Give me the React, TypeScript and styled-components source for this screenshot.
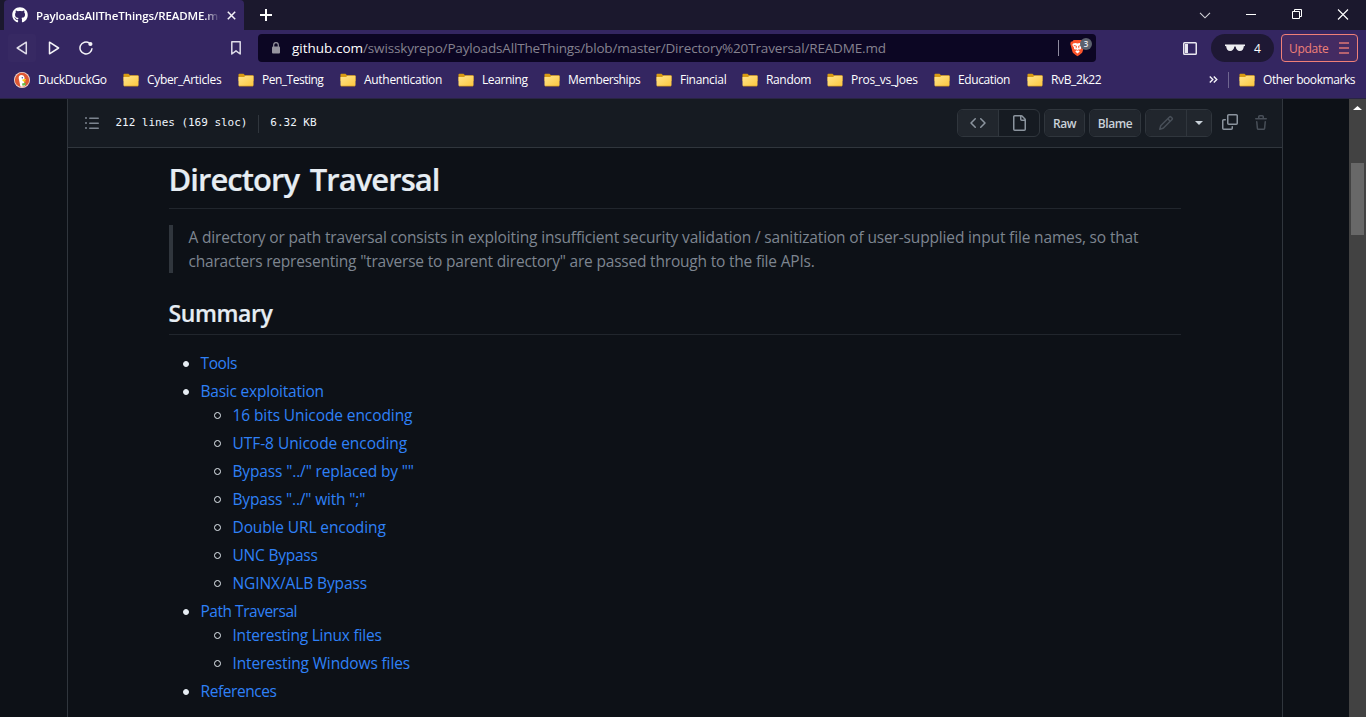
import React from "react";
import styled, { createGlobalStyle } from "styled-components";
import { FaGithub } from "react-icons/fa";

const GlobalStyle = createGlobalStyle`
  * { box-sizing: border-box; }
  html, body { margin: 0; padding: 0; background: #0d1117; overflow: hidden; }
  body { font-family: "Open Sans", "Noto Sans", sans-serif; }
`;

const Window = styled.div`
  width: 1366px;
  height: 717px;
  display: flex;
  flex-direction: column;
  overflow: hidden;
`;

/* Shared text label: size, weight, tracking and colour vary per use */
const Label = styled.span<{ $size?: number; $weight?: number; $track?: number; $color?: string }>`
  font-size: ${(p) => p.$size ?? 12}px;
  font-weight: ${(p) => p.$weight ?? 400};
  letter-spacing: ${(p) => p.$track ?? 0}px;
  color: ${(p) => p.$color ?? "#fff"};
  white-space: pre;
`;

const TitleBar = styled.div`
  height: 30px;
  flex: none;
  display: flex;
  align-items: center;
  background: #1b182d;
  padding-left: 4px;
`;

const Tab = styled.div`
  width: 240px;
  height: 30px;
  display: flex;
  align-items: center;
  padding: 0 8px;
  background: #342661;
  border-radius: 4px 4px 0 0;
`;

const TabTitle = styled.div`
  width: 184px;
  margin-left: 8px;
  overflow: hidden;
  display: flex;
  mask-image: linear-gradient(90deg, #000 168px, transparent 184px);
`;

const TabClose = styled.svg`
  margin-left: 7px;
  flex: none;
`;

const NewTab = styled.svg`
  margin-left: 15px;
`;

const Caption = styled.div`
  margin-left: auto;
  display: flex;
  align-items: center;
  height: 30px;
`;

const CaptionButton = styled.div`
  width: 46px;
  height: 30px;
  display: flex;
  align-items: center;
  justify-content: center;
`;

const Toolbar = styled.div`
  height: 36px;
  flex: none;
  display: flex;
  align-items: center;
  background: #342661;
  padding: 0 8px;
`;

const NavButton = styled.div<{ $active?: boolean }>`
  width: 28px;
  height: 28px;
  margin-right: 4px;
  border-radius: 3px;
  display: flex;
  align-items: center;
  justify-content: center;
  background: ${(p) => (p.$active ? "#372963" : "transparent")};
`;

const SaveButton = styled(NavButton)`
  margin: 0 8px 0 118px;
`;

const AddressBar = styled.div`
  width: 838px;
  height: 28px;
  display: flex;
  align-items: center;
  padding: 0 4px 0 13px;
  border-radius: 4px;
  background: #0c0623;
`;

const Url = styled.div`
  margin-left: 11px;
  display: flex;
  flex: 1;
`;

const AddressDivider = styled.div`
  width: 1px;
  height: 16px;
  background: #8f8b9f;
  margin-right: 11px;
`;

const Shield = styled.div`
  position: relative;
  width: 22px;
  height: 22px;
`;

const ShieldCount = styled.span`
  position: absolute;
  left: 10px;
  top: 1px;
  width: 12px;
  height: 12px;
  border-radius: 6px;
  background: #5c616e;
  color: #e8e8ee;
  font-size: 8px;
  font-weight: 600;
  line-height: 12px;
  text-align: center;
`;

const ShieldIcon = styled.svg`
  margin-top: 2px;
`;

const PanelIcon = styled.svg`
  margin-left: 87px;
`;

const PrivateBadge = styled.div`
  width: 63px;
  height: 28px;
  margin-left: 14px;
  border-radius: 14px;
  background: #1e1834;
  display: flex;
  align-items: center;
  padding-left: 14px;
  gap: 9px;
`;

const UpdateButton = styled.div`
  width: 77px;
  height: 28px;
  margin-left: 7px;
  border: 1px solid #f08078;
  border-radius: 4px;
  background: #442b62;
  display: flex;
  align-items: center;
  justify-content: space-between;
  padding: 0 8px 0 7px;
`;

const Bookmarks = styled.div`
  height: 33px;
  flex: none;
  display: flex;
  background: #342661;
  padding: 0 0 5px 14px;
  border-bottom: 1px solid #292542;
`;

const Bookmark = styled.div<{ $width: number }>`
  width: ${(p) => p.$width}px;
  display: flex;
  align-items: center;
  gap: 8px;
`;

const BookmarkEnd = styled.div`
  margin-left: auto;
  display: flex;
  align-items: center;
`;

const BookmarkDivider = styled.div`
  width: 1px;
  height: 16px;
  margin: 0 10px 0 10px;
  background: #6f6690;
`;

const Page = styled.div`
  flex: 1;
  min-height: 0;
  display: flex;
  background: #0d1117;
`;

const FileBox = styled.div`
  width: 1216px;
  margin-left: 67px;
  border: solid #30363d;
  border-width: 0 1px;
`;

const FileHeader = styled.div`
  height: 49px;
  display: flex;
  align-items: center;
  padding: 0 6px 0 16px;
  background: #161b22;
  border-bottom: 1px solid #30363d;
  color: #7d8590;
`;

const FileInfo = styled.div`
  display: flex;
  align-items: center;
  margin-left: 15.5px;
  padding-bottom: 2px;
  font-family: "DejaVu Sans Mono", "Liberation Mono", monospace;
  font-size: 11px;
  letter-spacing: -0.03px;
  color: #f0f6fc;
  white-space: pre;
`;

const InfoDivider = styled.div`
  width: 1px;
  height: 18px;
  margin: 4px 11px 0 11px;
  background: #30363d;
`;

const Actions = styled.div`
  margin-left: auto;
  display: flex;
  align-items: center;
`;

const Group = styled.div<{ $gap?: number }>`
  display: flex;
  height: 28px;
  margin-right: ${(p) => p.$gap ?? 4}px;
  border: 1px solid #30363d;
  border-radius: 6px;
  overflow: hidden;
`;

const GroupItem = styled.div<{ $width: number; $filled?: boolean; $color?: string; $line?: boolean }>`
  width: ${(p) => p.$width}px;
  display: flex;
  align-items: center;
  justify-content: center;
  background: ${(p) => (p.$filled ? "#21262d" : "transparent")};
  color: ${(p) => p.$color ?? "#8b949e"};
  border-right: ${(p) => (p.$line ? "1px solid #30363d" : "0")};
`;

const IconAction = styled.div<{ $dim?: boolean }>`
  width: 31px;
  display: flex;
  justify-content: center;
  padding-bottom: ${(p) => (p.$dim ? 0 : 2)}px;
  color: ${(p) => (p.$dim ? "#484f58" : "#8b949e")};
`;

const Readme = styled.article`
  width: 1012px;
  margin-left: 101px;
  padding-top: 11px;
  color: #e6edf3;
`;

const Title = styled.h1`
  margin: 0 0 16px;
  height: 50px;
  line-height: 40px;
  border-bottom: 1px solid #21262d;
  font-size: 31px;
  font-weight: 600;
  letter-spacing: -0.95px;
  word-spacing: 3.5px;
  text-indent: -0.5px;
  -webkit-text-stroke: 0.2px #e6edf3;
`;

const Quote = styled.blockquote`
  margin: 0 0 24px;
  padding: 0 0 0 15.5px;
  border-left: 4px solid #30363d;
  color: #7d8590;
  line-height: 24px;
  display: flex;
  flex-direction: column;
`;

const Heading = styled.h2`
  margin: 0 0 16px;
  height: 38px;
  line-height: 32px;
  border-bottom: 1px solid #21262d;
  font-size: 23px;
  font-weight: 600;
  letter-spacing: -0.4px;
  text-indent: -0.5px;
  -webkit-text-stroke: 0.2px #e6edf3;
`;

const List = styled.ul<{ $nested?: boolean }>`
  margin: 0;
  padding-left: ${(p) => (p.$nested ? 32 : 31.5)}px;
  list-style: none;
  line-height: 24px;
`;

const Item = styled.li`
  & + & { margin-top: 4px; }
`;

const Row = styled.div`
  display: flex;
  align-items: center;
  height: 24px;
`;

const Marker = styled.span<{ $hollow?: boolean }>`
  width: ${(p) => (p.$hollow ? 7 : 6)}px;
  height: ${(p) => (p.$hollow ? 7 : 6)}px;
  margin-left: ${(p) => (p.$hollow ? -18.5 : -18)}px;
  margin-right: ${(p) => (p.$hollow ? 11.5 : 12)}px;
  margin-top: 1px;
  border-radius: 50%;
  border: 1px solid #e6edf3;
  background: ${(p) => (p.$hollow ? "transparent" : "#e6edf3")};
`;

const Scrollbar = styled.div`
  width: 17px;
  margin-left: auto;
  background: #424242;
  display: flex;
  flex-direction: column;
  align-items: center;
  padding-top: 7px;
`;

const Thumb = styled.div`
  width: 13px;
  height: 72px;
  margin-top: 53px;
  background: #686868;
`;

const iconPaths = {
  list: "M2 4a1 1 0 100-2 1 1 0 000 2zm3.75-1.5a.75.75 0 000 1.5h8.5a.75.75 0 000-1.5h-8.5zm0 5a.75.75 0 000 1.5h8.5a.75.75 0 000-1.5h-8.5zm0 5a.75.75 0 000 1.5h8.5a.75.75 0 000-1.5h-8.5zM3 8a1 1 0 11-2 0 1 1 0 012 0zm-1 6a1 1 0 100-2 1 1 0 000 2z",
  code: "M4.72 3.22a.75.75 0 011.06 1.06L2.06 8l3.72 3.72a.75.75 0 11-1.06 1.06L.47 8.53a.75.75 0 010-1.06l4.25-4.25zm6.56 0a.75.75 0 10-1.06 1.06L13.94 8l-3.72 3.72a.75.75 0 101.06 1.06l4.25-4.25a.75.75 0 000-1.06l-4.25-4.25z",
  file: "M3.75 1.5a.25.25 0 00-.25.25v12.5c0 .138.112.25.25.25h9.5a.25.25 0 00.25-.25V6h-2.75A1.75 1.75 0 019 4.25V1.5H3.75zm6.75.062V4.25c0 .138.112.25.25.25h2.688a.252.252 0 00-.011-.013l-2.914-2.914a.272.272 0 00-.013-.011zM2 1.75C2 .784 2.784 0 3.75 0h6.586c.464 0 .909.184 1.237.513l2.914 2.914c.329.328.513.773.513 1.237v9.586A1.75 1.75 0 0113.25 16h-9.5A1.75 1.75 0 012 14.25V1.75z",
  pencil: "M11.013 1.427a1.75 1.75 0 012.474 0l1.086 1.086a1.75 1.75 0 010 2.474l-8.61 8.61c-.21.21-.47.364-.756.445l-3.251.93a.75.75 0 01-.927-.928l.929-3.25a1.75 1.75 0 01.445-.758l8.61-8.61zm1.414 1.06a.25.25 0 00-.354 0L10.811 3.75l1.439 1.44 1.263-1.263a.25.25 0 000-.354l-1.086-1.086zM11.189 6.25L9.75 4.81l-6.286 6.287a.25.25 0 00-.064.108l-.558 1.953 1.953-.558a.249.249 0 00.108-.064l6.286-6.286z",
  copy: "M0 6.75C0 5.784.784 5 1.75 5h1.5a.75.75 0 010 1.5h-1.5a.25.25 0 00-.25.25v7.5c0 .138.112.25.25.25h7.5a.25.25 0 00.25-.25v-1.5a.75.75 0 011.5 0v1.5A1.75 1.75 0 019.25 16h-7.5A1.75 1.75 0 010 14.25v-7.5zM5 1.75C5 .784 5.784 0 6.75 0h7.5C15.216 0 16 .784 16 1.75v7.5A1.75 1.75 0 0114.25 11h-7.5A1.75 1.75 0 015 9.25v-7.5zm1.75-.25a.25.25 0 00-.25.25v7.5c0 .138.112.25.25.25h7.5a.25.25 0 00.25-.25v-7.5a.25.25 0 00-.25-.25h-7.5z",
  trash: "M6.5 1.75a.25.25 0 01.25-.25h2.5a.25.25 0 01.25.25V3h-3V1.75zm4.5 0V3h2.25a.75.75 0 010 1.5H2.75a.75.75 0 010-1.5H5V1.75C5 .784 5.784 0 6.75 0h2.5C10.216 0 11 .784 11 1.75zM4.496 6.675a.75.75 0 10-1.492.15l.66 6.6A1.75 1.75 0 005.405 15h5.19c.9 0 1.652-.681 1.741-1.576l.66-6.6a.75.75 0 00-1.492-.149l-.66 6.6a.25.25 0 01-.249.225h-5.19a.25.25 0 01-.249-.225l-.66-6.6z",
};

const Icon = ({ name }: { name: keyof typeof iconPaths }) => (
  <svg width="16" height="16" viewBox="0 0 16 16" fill="currentColor">
    <path fillRule="evenodd" d={iconPaths[name]} />
  </svg>
);

const Folder = () => (
  <svg width="16" height="14" viewBox="0 0 16 14">
    <defs>
      <linearGradient id="folder" x1="0" y1="0" x2="1" y2="1">
        <stop offset="0" stopColor="#ffe48c" />
        <stop offset="1" stopColor="#fdc83f" />
      </linearGradient>
    </defs>
    <path d="M.5 1.5Q.5.7 1.3.7H5.5L7 2.3H14.7Q15.5 2.3 15.5 3V8H.5Z" fill="#d89b13" />
    <path d="M.5 4H6L7.5 2.8H15.5V12.3Q15.5 13 14.7 13H1.3Q.5 13 .5 12.3Z" fill="url(#folder)" />
    <path d="M1 13.2H15" stroke="#c98e1b" strokeWidth=".7" />
  </svg>
);

const Duck = () => (
  <svg width="16" height="16" viewBox="0 0 16 16">
    <circle cx="8" cy="8" r="8" fill="#f3d9d0" />
    <circle cx="8" cy="8" r="7.2" fill="#de5833" />
    <path d="M5 4.2Q6.6 2.2 9.4 3.4Q11 5 10.5 7.5Q9.8 9 10.3 11L11 14Q8.5 15 6.4 14.4L5.2 8.5Q4.2 5.6 5 4.2Z" fill="#fff" />
    <path d="M8.3 7.6L12 7.1Q12.7 7.9 11 8.4L12 9.3Q10 9.9 8.6 9Z" fill="#fdd20a" />
    <path d="M8 11.6L11.6 10.8V13.2L8.5 13.7Z" fill="#65bc46" />
    <circle cx="8.3" cy="5.8" r=".7" fill="#2d4f8e" />
  </svg>
);

const BraveShield = () => (
  <ShieldIcon width="16" height="18" viewBox="0.5 0 16 18">
    <path d="M4.2 1H11.8L13.2 2.6L14.7 2.8L15.2 5L14.8 6.3L12.9 13.2Q12.3 14.4 8 17.3Q3.7 14.4 3.1 13.2L1.2 6.3L.8 5L1.3 2.8L2.8 2.6Z" fill="#fb542b" />
    <path d="M3.6 4.4L6 4L8 4.5L10 4L12.4 4.4L13.2 6L11.5 8.5L11.4 10.1L9.2 11.2L10.2 12.5L8 14.4L5.8 12.5L6.8 11.2L4.6 10.1L4.5 8.5L2.8 6Z" fill="#fff" />
    <path d="M4.2 6.4L7 7.2L6.6 9.2M11.8 6.4L9 7.2L9.4 9.2M6 10.5L8 11.4L10 10.5" stroke="#fb542b" strokeWidth=".9" fill="none" />
  </ShieldIcon>
);

const folders: { name: string; width: number; track: number }[] = [
  { name: "Cyber_Articles", width: 115, track: -0.32 },
  { name: "Pen_Testing", width: 102, track: -0.5 },
  { name: "Authentication", width: 118, track: -0.3 },
  { name: "Learning", width: 86, track: -0.42 },
  { name: "Memberships", width: 112, track: -0.4 },
  { name: "Financial", width: 86, track: -0.3 },
  { name: "Random", width: 85, track: -0.35 },
  { name: "Pros_vs_Joes", width: 107, track: -0.3 },
  { name: "Education", width: 93, track: -0.4 },
  { name: "RvB_2k22", width: 90, track: -0.37 },
];

type Entry = { text: string; track: number; children?: Entry[] };

const summary: Entry[] = [
  { text: "Tools", track: -0.4 },
  {
    text: "Basic exploitation",
    track: -0.22,
    children: [
      { text: "16 bits Unicode encoding", track: -0.09 },
      { text: "UTF-8 Unicode encoding", track: -0.05 },
      { text: 'Bypass "../" replaced by ""', track: -0.14 },
      { text: 'Bypass "../" with ";"', track: -0.17 },
      { text: "Double URL encoding", track: -0.12 },
      { text: "UNC Bypass", track: -0.22 },
      { text: "NGINX/ALB Bypass", track: -0.1 },
    ],
  },
  {
    text: "Path Traversal",
    track: -0.48,
    children: [
      { text: "Interesting Linux files", track: -0.22 },
      { text: "Interesting Windows files", track: -0.14 },
    ],
  },
  { text: "References", track: -0.42 },
];

const Entries = ({ items, nested }: { items: Entry[]; nested?: boolean }) => (
  <List $nested={nested}>
    {items.map((it) => (
      <Item key={it.text}>
        <Row>
          <Marker $hollow={nested} />
          <Label $size={15.5} $track={it.track} $color="#2f81f7">{it.text}</Label>
        </Row>
        {it.children && <Entries items={it.children} nested />}
      </Item>
    ))}
  </List>
);

export default function App() {
  return (
    <Window>
      <GlobalStyle />
      <TitleBar>
        <Tab>
          <FaGithub size={16} color="#fff" />
          <TabTitle>
            <Label $size={11.5} $weight={600} $track={-0.12}>PayloadsAllTheThings/README.md</Label>
          </TabTitle>
          <TabClose width="9" height="9" viewBox="0 0 9 9">
            <path d="M.8.8L8.2 8.2M8.2.8L.8 8.2" stroke="#f4f3f8" strokeWidth="1.5" />
          </TabClose>
        </Tab>
        <NewTab width="14" height="12" viewBox="0 0 14 12">
          <path d="M7 0V12M1 6H13" stroke="#fff" strokeWidth="2" />
        </NewTab>
        <Caption>
          <CaptionButton>
            <svg width="12" height="7" viewBox="0 0 12 7"><path d="M1 .8L6 5.8L11 .8" stroke="#d5d4da" strokeWidth="1.1" fill="none" /></svg>
          </CaptionButton>
          <CaptionButton>
            <svg width="10" height="2" viewBox="0 0 10 2"><path d="M0 .5H10" stroke="#fff" /></svg>
          </CaptionButton>
          <CaptionButton>
            <svg width="10" height="12" viewBox="0 0 10 12"><path d="M.5 2.5H7.5V9.5H.5ZM2.5 2.5V.5H9.5V7.5H7.5" stroke="#fff" fill="none" /></svg>
          </CaptionButton>
          <CaptionButton>
            <svg width="12" height="12" viewBox="0 0 12 12"><path d="M1 .5L11 10.5M11 .5L1 10.5" stroke="#fff" strokeWidth="1.1" /></svg>
          </CaptionButton>
        </Caption>
      </TitleBar>
      <Toolbar>
        <NavButton $active>
          <svg width="12" height="14" viewBox="0 0 12 14"><path d="M10.3 1.2V12.8L1.2 7Z" stroke="#dedbe8" strokeWidth="1.5" strokeLinejoin="round" fill="none" /></svg>
        </NavButton>
        <NavButton>
          <svg width="12" height="14" viewBox="0 0 12 14"><path d="M1.5 1.2V12.8L10.6 7Z" stroke="#f4f3f8" strokeWidth="1.5" strokeLinejoin="round" fill="none" /></svg>
        </NavButton>
        <NavButton>
          <svg width="14" height="14" viewBox="0 0 14 14">
            <path d="M10.4 2A6 6 0 1 0 13 7.2" stroke="#f4f3f8" strokeWidth="1.5" fill="none" />
            <circle cx="11.4" cy="3" r="2.1" fill="#f4f3f8" />
          </svg>
        </NavButton>
        <SaveButton>
          <svg width="10" height="14" viewBox="0 0 10 14"><path d="M.8.8H9.2V13L5 9.8L.8 13Z" stroke="#dedbe8" strokeWidth="1.5" strokeLinejoin="round" fill="none" /></svg>
        </SaveButton>
        <AddressBar>
          <svg width="10" height="12" viewBox="0 0 10 12">
            <rect x="1" y="4.5" width="8" height="7" rx="1" fill="#96949e" />
            <path d="M2.7 5V3A2.3 2.3 0 0 1 7.3 3V5" stroke="#96949e" strokeWidth="1.2" fill="none" />
          </svg>
          <Url>
            <Label $size={13.5} $track={0}>github.com</Label>
            <Label $size={13.5} $track={-0.155} $color="#85828f">/swisskyrepo/PayloadsAllTheThings/blob/master/Directory%20Traversal/README.md</Label>
          </Url>
          <AddressDivider />
          <Shield>
            <BraveShield />
            <ShieldCount>3</ShieldCount>
          </Shield>
        </AddressBar>
        <PanelIcon width="14" height="13" viewBox="0 0 14 13">
          <rect x=".75" y=".75" width="12.5" height="11.5" rx=".8" stroke="#e9e7f0" strokeWidth="1.5" fill="none" />
          <path d="M2 2H5V11H2Z" fill="#e9e7f0" />
        </PanelIcon>
        <PrivateBadge>
          <svg width="20" height="8" viewBox="0 0 20 8">
            <path d="M0 .4H20V2L18.8 2.3Q18.6 7 14.8 7Q11.4 7 10.6 2.6H9.4Q8.6 7 5.2 7Q1.4 7 1.2 2.3L0 2Z" fill="#ededf1" />
          </svg>
          <Label>4</Label>
        </PrivateBadge>
        <UpdateButton>
          <Label $color="#f08078" $track={-0.3}>Update</Label>
          <svg width="10" height="12" viewBox="0 0 10 12"><path d="M0 1H10M0 6H10M0 11H10" stroke="#dc7674" strokeWidth="1.5" /></svg>
        </UpdateButton>
      </Toolbar>
      <Bookmarks>
        <Bookmark $width={109}>
          <Duck />
          <Label $track={-0.35}>DuckDuckGo</Label>
        </Bookmark>
        {folders.map((f) => (
          <Bookmark key={f.name} $width={f.width}>
            <Folder />
            <Label $track={f.track}>{f.name}</Label>
          </Bookmark>
        ))}
        <BookmarkEnd>
          <svg width="9" height="7" viewBox="0 0 9 7"><path d="M.8.5L3.8 3.5L.8 6.5M4.8.5L7.8 3.5L4.8 6.5" stroke="#f4f3f8" strokeWidth="1.4" fill="none" /></svg>
          <BookmarkDivider />
          <Bookmark $width={127}>
            <Folder />
            <Label $track={-0.43}>Other bookmarks</Label>
          </Bookmark>
        </BookmarkEnd>
      </Bookmarks>
      <Page>
        <FileBox>
          <FileHeader>
            <Icon name="list" />
            <FileInfo>
              212 lines (169 sloc)
              <InfoDivider />
              6.32 KB
            </FileInfo>
            <Actions>
              <Group>
                <GroupItem $width={41} $filled $line><Icon name="code" /></GroupItem>
                <GroupItem $width={40}><Icon name="file" /></GroupItem>
              </Group>
              <Group>
                <GroupItem $width={39} $filled><Label $weight={600} $track={-0.5} $color="#c9d1d9">Raw</Label></GroupItem>
              </Group>
              <Group>
                <GroupItem $width={50} $filled><Label $weight={600} $track={-0.4} $color="#c9d1d9">Blame</Label></GroupItem>
              </Group>
              <Group $gap={2}>
                <GroupItem $width={41} $filled $line $color="#484f58"><Icon name="pencil" /></GroupItem>
                <GroupItem $width={24} $filled $color="#c9d1d9">
                  <svg width="8" height="4" viewBox="0 0 8 4"><path d="M0 0H8L4 4Z" fill="currentColor" /></svg>
                </GroupItem>
              </Group>
              <IconAction><Icon name="copy" /></IconAction>
              <IconAction $dim><Icon name="trash" /></IconAction>
            </Actions>
          </FileHeader>
          <Readme>
            <Title>Directory Traversal</Title>
            <Quote>
              <Label $size={15.5} $track={-0.155} $color="#7d8590">A directory or path traversal consists in exploiting insufficient security validation / sanitization of user-supplied input file names, so that</Label>
              <Label $size={15.5} $track={-0.2} $color="#7d8590">characters representing "traverse to parent directory" are passed through to the file APIs.</Label>
            </Quote>
            <Heading>Summary</Heading>
            <Entries items={summary} />
          </Readme>
        </FileBox>
        <Scrollbar>
          <svg width="9" height="4" viewBox="0 0 9 4"><path d="M4.5 0L9 4H0Z" fill="#fff" /></svg>
          <Thumb />
        </Scrollbar>
      </Page>
    </Window>
  );
}
